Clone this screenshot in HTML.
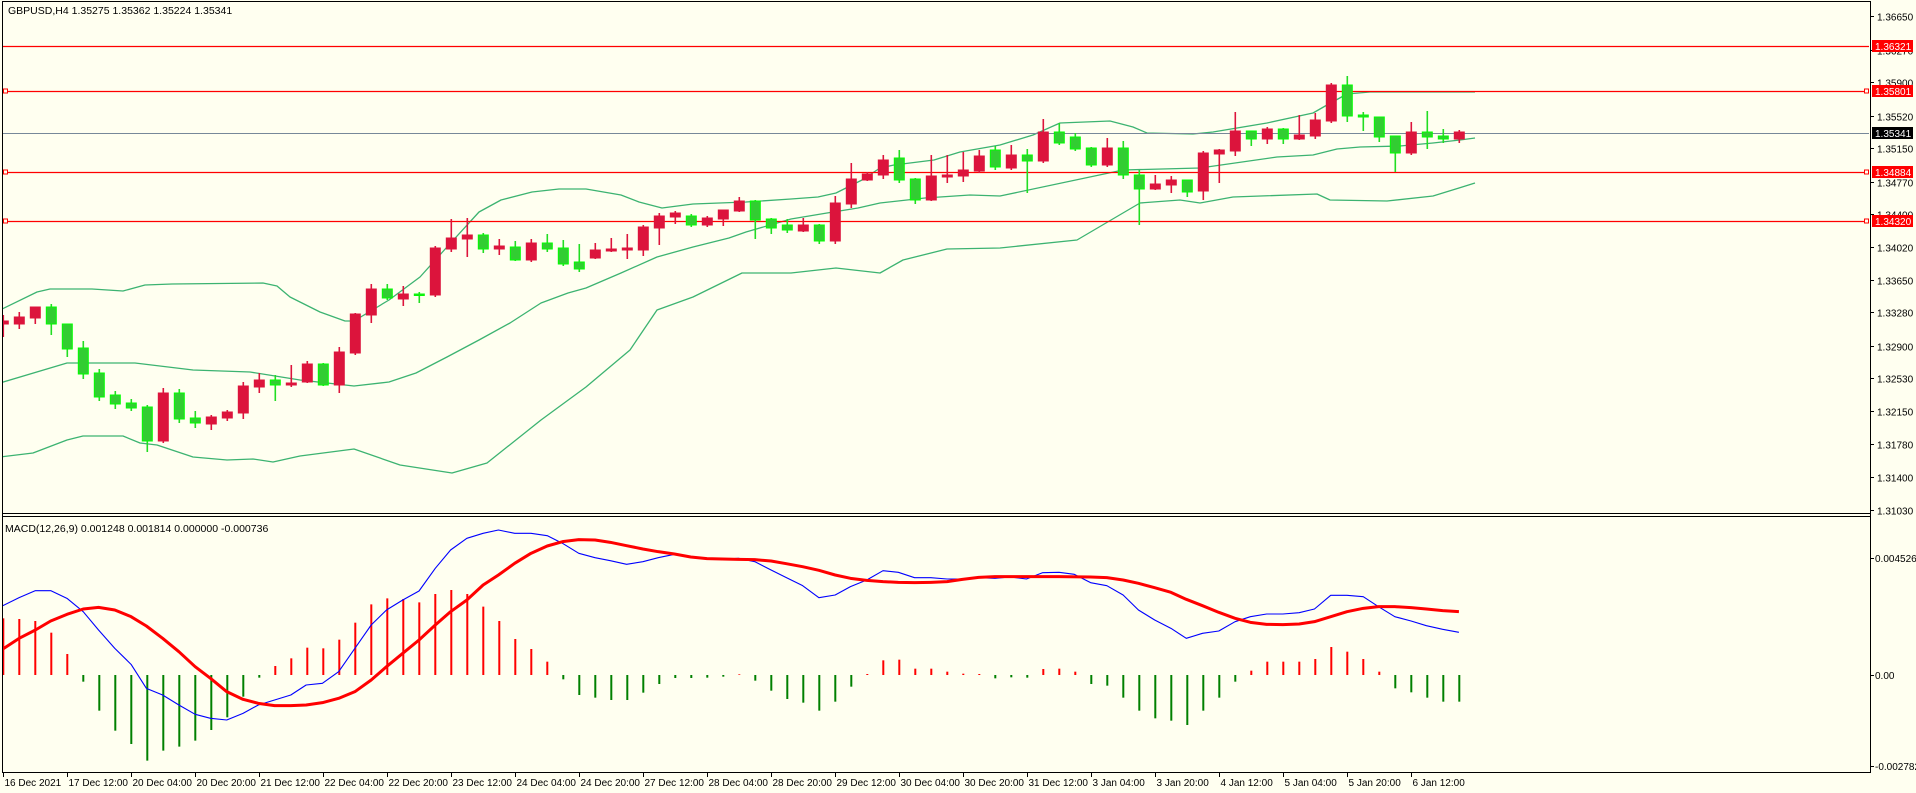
<!DOCTYPE html>
<html><head><meta charset="utf-8"><style>
html,body{margin:0;padding:0;background:#FFFFF0;}
svg{display:block;}
text{font-family:"Liberation Sans",sans-serif;font-size:10px;fill:#000;}
</style></head><body>
<svg id="s" width="1916" height="793" viewBox="0 0 1916 793" xmlns="http://www.w3.org/2000/svg">
<rect x="0" y="0" width="1916" height="793" fill="#FFFFF0"/>
<defs>
<clipPath id="cm"><rect x="3" y="2" width="1866" height="511"/></clipPath>
<clipPath id="cd"><rect x="3" y="517" width="1866" height="254"/></clipPath>
</defs>
<g id="main" clip-path="url(#cm)"></g>
<g id="macd" clip-path="url(#cd)"></g>
<line x1="2.5" y1="1" x2="2.5" y2="772" stroke="#000"/>
<line x1="2" y1="1.5" x2="1870" y2="1.5" stroke="#000"/>
<line x1="1870.5" y1="1" x2="1870.5" y2="773" stroke="#000"/>
<line x1="2" y1="513.5" x2="1870" y2="513.5" stroke="#000"/>
<line x1="2" y1="516.5" x2="1870" y2="516.5" stroke="#000"/>
<line x1="2" y1="772.5" x2="1871" y2="772.5" stroke="#000"/>
<g id="axes"></g>
<text x="8" y="14" style="font-size:10.5px">GBPUSD,H4  1.35275 1.35362 1.35224 1.35341</text>
<text x="5" y="532" style="font-size:10.5px">MACD(12,26,9) 0.001248 0.001814 0.000000 -0.000736</text>
</svg>
<script>
var NS="http://www.w3.org/2000/svg";
function el(p,t,a,txt){var e=document.createElementNS(NS,t);for(var k in a)e.setAttribute(k,a[k]);if(txt!==undefined)e.textContent=txt;p.appendChild(e);return e;}
var M=document.getElementById('main'),D=document.getElementById('macd'),A=document.getElementById('axes');
function pl(p,pts,col,w){el(p,'polyline',{points:pts.map(function(q){return q[0]+','+q[1]}).join(' '),fill:'none',stroke:col,'stroke-width':w,'stroke-linejoin':'round'});}
var up=[[0,310],[37,292],[50,289],[92,289],[123,291],[145,285],[172,284],[263,283],[277,286],[290,297],[300,302],[320,312],[345,321],[354,321],[389,300],[420,277],[447,247],[479,212],[501,200],[532,192],[559,189],[586,189],[621,195],[639,202],[662,208],[693,204],[746,202],[791,199],[818,197],[836,193],[862,180],[880,168],[894,165],[934,160],[960,152],[1000,145],[1033,135],[1060,123],[1110,121],[1133,127],[1147,133],[1193,134],[1213,132],[1267,123],[1313,113],[1327,105],[1347,94],[1370,92],[1475,92]];
var mid=[[0,383],[67,363],[135,363],[193,370],[250,372],[300,380],[354,386],[389,382],[416,373],[447,357],[479,340],[510,323],[541,303],[568,293],[586,288],[621,273],[657,257],[693,247],[729,238],[746,232],[791,219],[827,213],[858,208],[880,203],[925,198],[970,195],[1000,196],[1123,170],[1200,168],[1277,157],[1313,155],[1337,149],[1360,147],[1400,146],[1433,143],[1460,140],[1475,138]];
var lo=[[0,457],[33,453],[67,440],[83,436],[123,436],[140,443],[157,445],[193,457],[227,460],[253,459],[273,462],[300,456],[354,449],[400,465],[452,473],[487,463],[541,420],[586,387],[630,350],[657,310],[693,297],[742,273],[791,273],[836,268],[880,273],[903,260],[947,249],[1000,248],[1077,240],[1140,203],[1180,200],[1200,203],[1233,197],[1317,194],[1330,200],[1387,201],[1433,196],[1459,188],[1475,183]];
[up,mid,lo].forEach(function(b){pl(M,b,'#3CB371',1.3);});
el(M,'line',{x1:0,y1:133.5,x2:1870,y2:133.5,stroke:'#778899'});
[46,91,172,221].forEach(function(y){el(M,'line',{x1:0,y1:y+.5,x2:1870,y2:y+.5,stroke:'#FF0000','stroke-width':1.3});});
[91,172,221].forEach(function(y){el(M,'rect',{x:3.5,y:y-2,width:4,height:4,fill:'#FFFFF0',stroke:'#FF0000'});el(M,'rect',{x:1864.5,y:y-2,width:4,height:4,fill:'#FFFFF0',stroke:'#FF0000'});});
var C=[[321,324,315,337,'r'],[317,324,312,329,'r'],[307,318,307,324,'r'],[307,324,304,335,'g'],[324,349,324,357,'g'],[348,374,341,379,'g'],[373,397,369,401,'g'],[395,404,391,409,'g'],[403,408,399,411,'g'],[407,441,405,452,'g'],[393,441,388,443,'r'],[393,419,389,423,'g'],[418,423,411,428,'g'],[417,424,415,430,'r'],[412,418,410,421,'r'],[386,413,382,419,'r'],[380,387,373,393,'r'],[380,385,375,401,'g'],[383,385,365,387,'r'],[364,382,361,383,'r'],[364,385,363,386,'g'],[352,385,347,393,'r'],[314,353,313,355,'r'],[289,315,284,323,'r'],[289,298,284,300,'g'],[294,299,286,306,'r'],[294,295,292,303,'g'],[248,295,246,297,'r'],[238,249,219,252,'r'],[235,239,218,257,'r'],[235,249,233,253,'g'],[246,249,239,255,'r'],[247,260,241,261,'g'],[243,260,239,262,'r'],[243,249,234,252,'g'],[248,264,240,266,'g'],[262,269,244,272,'g'],[250,258,243,259,'r'],[249,251,238,252,'r'],[248,250,234,259,'r'],[227,250,225,256,'r'],[216,228,213,245,'r'],[213,217,211,224,'r'],[216,225,214,227,'g'],[218,225,216,227,'r'],[210,219,210,226,'r'],[201,211,197,212,'r'],[201,220,200,239,'g'],[219,228,218,234,'g'],[225,230,219,233,'g'],[225,231,218,232,'r'],[225,241,224,244,'g'],[203,241,196,244,'r'],[179,204,163,208,'r'],[174,180,172,181,'r'],[160,175,155,179,'r'],[158,180,150,183,'g'],[179,200,178,204,'g'],[176,200,155,201,'r'],[175,177,155,183,'r'],[170,176,152,182,'r'],[156,171,150,173,'r'],[150,167,146,170,'g'],[155,168,145,170,'r'],[155,161,149,193,'g'],[132,161,119,163,'r'],[132,143,123,145,'g'],[137,149,133,151,'g'],[148,165,147,167,'g'],[148,165,138,167,'r'],[148,175,141,179,'g'],[175,189,170,225,'g'],[184,189,175,190,'r'],[180,185,176,193,'r'],[180,192,180,197,'g'],[153,191,151,200,'r'],[150,154,149,183,'r'],[131,151,112,156,'r'],[131,139,131,146,'g'],[129,139,127,144,'r'],[129,139,128,144,'g'],[135,139,115,140,'r'],[120,136,113,139,'r'],[85,121,83,123,'r'],[85,116,76,122,'g'],[115,117,112,131,'g'],[117,137,117,142,'g'],[136,153,136,172,'g'],[132,153,122,155,'r'],[132,137,111,149,'g'],[136,139,129,143,'g'],[132,139,130,143,'r']];
C.forEach(function(c,i){var x=3.3+16*i;var g=c[4]=='g';var wc=g?'#22DD22':'#DC143C';
el(M,'line',{x1:x,y1:c[2],x2:x,y2:c[3],stroke:wc,'stroke-width':1.6});
var h=Math.max(c[1]-c[0],1.5);
el(M,'rect',{x:x-5,y:c[0],width:10,height:h,fill:g?'#32CD32':'#DC143C',stroke:g?'#00FF00':'#DC143C','stroke-width':1});});
var H=[310,312,318,353,417,500,587,647,687,737,707,695,677,645,607,545,488,453,430,398,400,374,323,268,250,252,262,237,225,237,275,318,372,402,440,493,540,548,555,555,533,507,489,489,488,485,478,497,527,552,563,587,560,515,477,436,434,461,461,470,476,477,490,487,488,462,461,470,507,512,548,587,610,617,630,587,548,500,467,440,440,440,432,396,410,432,470,520,532,548,560,560];
H.forEach(function(v,i){var x=3.3+16*i;var y=515+v/3;var r=v<480;el(D,'line',{x1:x,y1:675,x2:x,y2:y,stroke:r?'#FF0000':'#008000','stroke-width':2});});
function cv(a){return a.map(function(q){return [q[0]/1.0453,515+q[1]/3];});}
var B=[[3,272],[20,248],[37,227],[53,227],[70,250],[87,290],[103,345],[120,400],[137,448],[153,520],[170,540],[187,570],[204,598],[220,610],[237,615],[254,595],[270,570],[287,555],[304,540],[320,510],[337,505],[354,470],[371,400],[388,330],[404,285],[421,255],[438,228],[455,160],[471,105],[488,70],[505,55],[521,45],[538,55],[555,55],[572,62],[588,85],[605,115],[622,128],[638,137],[655,148],[672,140],[688,128],[705,118],[722,125],[739,133],[755,133],[772,130],[789,140],[806,165],[822,188],[839,212],[856,248],[873,240],[889,215],[906,195],[923,167],[939,172],[956,188],[973,188],[990,192],[1006,192],[1023,188],[1040,190],[1056,186],[1073,192],[1090,173],[1107,172],[1123,178],[1140,203],[1157,212],[1174,240],[1190,285],[1207,315],[1224,340],[1240,370],[1257,355],[1274,348],[1291,320],[1307,305],[1324,297],[1341,297],[1358,293],[1374,282],[1391,241],[1408,241],[1425,245],[1441,275],[1458,305],[1475,318],[1491,332],[1508,343],[1525,352]];
var R=[[3,402],[20,370],[37,345],[53,318],[70,298],[87,282],[103,277],[120,285],[137,305],[153,333],[170,370],[187,410],[204,455],[220,490],[237,530],[254,553],[270,565],[287,572],[304,572],[320,570],[337,563],[354,550],[371,530],[388,495],[404,455],[421,415],[438,375],[455,330],[471,290],[488,255],[505,210],[521,180],[538,145],[555,115],[572,93],[588,80],[605,74],[622,75],[638,82],[655,92],[672,102],[688,110],[705,117],[722,126],[739,131],[755,132],[772,133],[789,134],[806,138],[822,146],[839,155],[856,166],[873,180],[889,190],[906,196],[923,200],[939,202],[956,203],[973,202],[990,200],[1006,193],[1023,187],[1040,185],[1073,185],[1107,185],[1140,186],[1157,188],[1174,195],[1190,205],[1207,218],[1224,232],[1240,253],[1257,272],[1274,292],[1291,310],[1307,322],[1324,328],[1341,329],[1358,327],[1374,320],[1391,305],[1408,290],[1425,280],[1441,275],[1458,275],[1475,278],[1491,282],[1508,287],[1525,290]];
pl(D,cv(B),'#0000FF',1.1);
pl(D,cv(R),'#FF0000',3);
var P=['1.36650','1.36270','1.35900','1.35520','1.35150','1.34770','1.34400','1.34020','1.33650','1.33280','1.32900','1.32530','1.32150','1.31780','1.31400','1.31030'];
P.forEach(function(p){var y=Math.round(91+(1.35801-parseFloat(p))*8778)+0.5;el(A,'line',{x1:1870,y1:y,x2:1874,y2:y,stroke:'#000'});el(A,'text',{x:1877,y:y+4},p);});
function tag(y,txt,bg){el(A,'rect',{x:1872,y:y-6,width:41,height:12,fill:bg});el(A,'text',{x:1875,y:y+4,style:'fill:#fff'},txt);}
tag(46,'1.36321','#FF0000');tag(91,'1.35801','#FF0000');tag(133,'1.35341','#000000');tag(172,'1.34884','#FF0000');tag(221,'1.34320','#FF0000');
[[558,'0.004526'],[675,'0.00'],[766,'-0.002782']].forEach(function(a){el(A,'line',{x1:1870,y1:a[0]+.5,x2:1874,y2:a[0]+.5,stroke:'#000'});el(A,'text',{x:1875,y:a[0]+4},a[1]);});
var T=['16 Dec 2021','17 Dec 12:00','20 Dec 04:00','20 Dec 20:00','21 Dec 12:00','22 Dec 04:00','22 Dec 20:00','23 Dec 12:00','24 Dec 04:00','24 Dec 20:00','27 Dec 12:00','28 Dec 04:00','28 Dec 20:00','29 Dec 12:00','30 Dec 04:00','30 Dec 20:00','31 Dec 12:00','3 Jan 04:00','3 Jan 20:00','4 Jan 12:00','5 Jan 04:00','5 Jan 20:00','6 Jan 12:00'];
T.forEach(function(t,k){var x=Math.round(2.7+64*k)+0.5;el(A,'line',{x1:x,y1:773,x2:x,y2:777,stroke:'#000'});el(A,'text',{x:x+1,y:786},t);});
</script>
</body></html>
